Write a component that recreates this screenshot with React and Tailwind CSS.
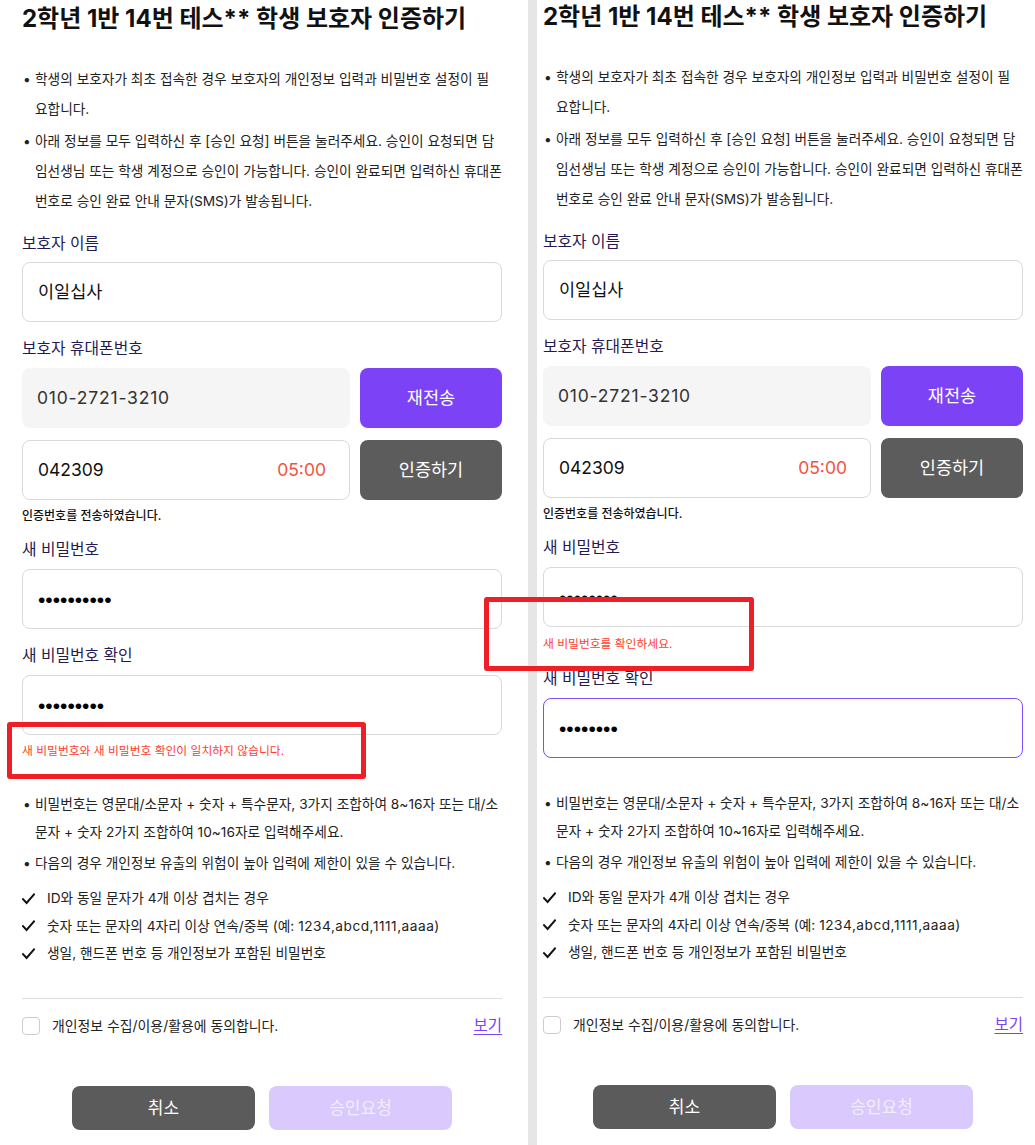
import React from "react";

function Label({ children, className = "" }) {
  return (
    <div className={"text-[15.8px] leading-6 text-[#241a52] " + className}>
      {children}
    </div>
  );
}

function Bullet({ children, className = "" }) {
  return (
    <li className={"flex " + className}>
      <span className="w-[13px] shrink-0 pl-[1px]">•</span>
      <span>{children}</span>
    </li>
  );
}

function Check({ children }) {
  return (
    <li className="flex items-center">
      <svg width="13" height="12" viewBox="0 0 13 12" className="shrink-0">
        <polyline
          points="1,6.2 4.6,10 12,1.5"
          fill="none"
          stroke="#111"
          strokeWidth="2"
          strokeLinecap="square"
        />
      </svg>
      <span className="ml-[12px]">{children}</span>
    </li>
  );
}

function PwInput({ count, focus }) {
  return (
    <div
      className={
        focus
          ? "mt-[7px] h-[60px] rounded-lg border border-[#7c4dff] px-[15px] flex items-center"
          : "mt-[7px] h-[60px] rounded-lg border border-[#d9d9d9] px-[15px] flex items-center"
      }
    >
      <span className="font-['Liberation_Sans',sans-serif] text-[21px] leading-none text-black">
        {"•".repeat(count)}
      </span>
    </div>
  );
}

function Err({ children, className = "" }) {
  return (
    <p className={"text-[11.8px] leading-4 text-[#ff3d2e] " + className}>
      {children}
    </p>
  );
}

function Form({ right }) {
  return (
    <div className="flex flex-col">
      <h1 className="text-[24px] font-bold leading-[38px] text-[#111]">
        2학년 1반 14번 테스** 학생 보호자 인증하기
      </h1>
      <ul className="mt-[26px] flex flex-col gap-[2px] text-[13.7px] leading-[30px] text-[#222]">
        <Bullet className="pr-[4px]">
          학생의 보호자가 최초 접속한 경우 보호자의 개인정보 입력과 비밀번호 설정이 필요합니다.
        </Bullet>
        <Bullet>
          아래 정보를 모두 입력하신 후 [승인 요청] 버튼을 눌러주세요. 승인이 요청되면 담임선생님 또는 학생 계정으로 승인이 가능합니다. 승인이 완료되면 입력하신 휴대폰번호로 승인 완료 안내 문자(SMS)가 발송됩니다.
        </Bullet>
      </ul>

      <Label className="mt-[16px]">보호자 이름</Label>
      <div className="mt-[6px] h-[60px] rounded-lg border border-[#d9d9d9] px-[15px] flex items-center text-[17.5px] text-[#111]">
        이일십사
      </div>

      <Label className="mt-[15px]">보호자 휴대폰번호</Label>
      <div className="mt-[7px] flex gap-[10px]">
        <div className="flex-1 h-[60px] rounded-lg bg-[#f5f5f5] px-[15px] flex items-center text-[17.5px] tracking-[0.8px] text-[#333]">
          010-2721-3210
        </div>
        <button className="w-[142px] h-[60px] rounded-lg bg-[#7c43f6] text-white text-[17.5px]">
          재전송
        </button>
      </div>
      <div className="mt-[12px] flex gap-[10px]">
        <div className="flex-1 h-[60px] rounded-lg border border-[#d9d9d9] pl-[15px] pr-[23px] flex items-center justify-between text-[17.5px]">
          <span className="text-[#111]">042309</span>
          <span className="text-[#f2533f]">05:00</span>
        </div>
        <button className="w-[142px] h-[60px] rounded-lg bg-[#5c5c5c] text-white text-[17.5px]">
          인증하기
        </button>
      </div>
      <p className="mt-2 text-[12px] leading-4 font-medium text-[#111]">
        인증번호를 전송하였습니다.
      </p>

      <Label className="mt-[14px]">새 비밀번호</Label>
      <PwInput count={right ? 8 : 10} />
      {right && <Err className="mt-[9px]">새 비밀번호를 확인하세요.</Err>}
      <Label className="mt-[15px]">새 비밀번호 확인</Label>
      <PwInput count={right ? 8 : 9} focus={right} />
      {!right && (
        <Err className="mt-2">새 비밀번호와 새 비밀번호 확인이 일치하지 않습니다.</Err>
      )}

      <ul className="mt-[31px] flex flex-col gap-[3px] text-[13.7px] leading-[28px] text-[#222]">
        <Bullet>
          비밀번호는 영문대/소문자 + 숫자 + 특수문자, 3가지 조합하여 8~16자 또는 대/소문자 + 숫자 2가지 조합하여 10~16자로 입력해주세요.
        </Bullet>
        <Bullet>다음의 경우 개인정보 유출의 위험이 높아 입력에 제한이 있을 수 있습니다.</Bullet>
      </ul>
      <ul className="mt-2 flex flex-col text-[13.7px] leading-[27.5px] text-[#222]">
        <Check>ID와 동일 문자가 4개 이상 겹치는 경우</Check>
        <Check>
          숫자 또는 문자의 4자리 이상 연속/중복 (예:{" "}
          <span className="tracking-[0.5px]">1234,abcd,1111,aaaa</span>)
        </Check>
        <Check>생일, 핸드폰 번호 등 개인정보가 포함된 비밀번호</Check>
      </ul>

      <div className="mt-[30px] h-px bg-[#dddddd]" />
      <div className="mt-[17px] flex items-center">
        <span className="w-[18px] h-[18px] rounded-[4px] border border-[#cccccc] bg-white shrink-0" />
        <span className="ml-3 text-[13.9px] text-[#222]">개인정보 수집/이용/활용에 동의합니다.</span>
        <a className="ml-auto text-[15.5px] leading-5 text-[#7c43f6] underline underline-offset-[3px]">보기</a>
      </div>

      <div className="mt-[50px] flex justify-center gap-[14px]">
        <button className="w-[183px] h-[44px] rounded-lg bg-[#5b5b5b] text-white text-[17px]">
          취소
        </button>
        <button className="w-[183px] h-[44px] rounded-lg bg-[#d9c9fc] text-[#f3eeff] text-[17px]">
          승인요청
        </button>
      </div>
    </div>
  );
}

export default function App() {
  return (
    <div className="relative w-[1035px] h-[1145px] overflow-hidden bg-white flex font-['Inter','Noto_Sans_CJK_KR',sans-serif]">
      <div className="w-[528px] shrink-0 pl-[22px] pr-[26px]">
        <Form />
      </div>
      <div className="w-[9px] shrink-0 bg-[#e6e6e6]" />
      <div className="w-[498px] shrink-0 pl-[6px] pr-[12px] -mt-[2px]">
        <Form right />
      </div>
      <div className="absolute left-[7px] top-[722px] w-[359px] h-[57px] border-[5px] border-[#ee1f26] rounded-[3px]" />
      <div className="absolute left-[484px] top-[597px] w-[270px] h-[74px] border-[5px] border-[#ee1f26] rounded-[3px]" />
    </div>
  );
}
